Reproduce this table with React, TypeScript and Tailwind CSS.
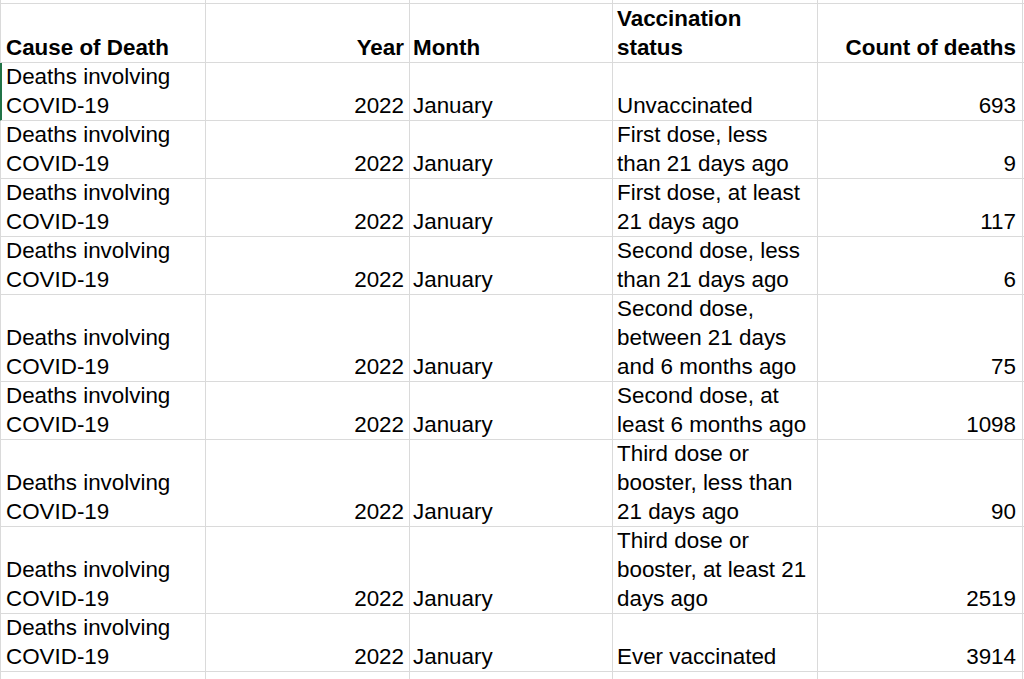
import React from "react";

type Row = {
  status: string[];
  count: number;
};

const rows: Row[] = [
  { status: ["Unvaccinated"], count: 693 },
  { status: ["First dose, less", "than 21 days ago"], count: 9 },
  { status: ["First dose, at least", "21 days ago"], count: 117 },
  { status: ["Second dose, less", "than 21 days ago"], count: 6 },
  { status: ["Second dose,", "between 21 days", "and 6 months ago"], count: 75 },
  { status: ["Second dose, at", "least 6 months ago"], count: 1098 },
  { status: ["Third dose or", "booster, less than", "21 days ago"], count: 90 },
  { status: ["Third dose or", "booster, at least 21", "days ago"], count: 2519 },
  { status: ["Ever vaccinated"], count: 3914 },
];

const cols = "grid grid-cols-[206px_204px_203px_205px_205px_1fr]";
const cell = "flex flex-col justify-end border-r border-b border-[#dadada] overflow-hidden whitespace-nowrap";

function Lines({ lines }: { lines: string[] }) {
  return (
    <>
      {lines.map((l) => (
        <span key={l} className="block h-[29px]">
          {l}
        </span>
      ))}
    </>
  );
}

export default function App() {
  return (
    <div
      className="w-[1024px] h-[679px] overflow-hidden bg-white text-black text-[22.4px] leading-[29px]"
      style={{ fontFamily: '"Liberation Sans", Arial, sans-serif' }}
    >
      {/* strip of the row above */}
      <div className={`${cols} h-[4px]`}>
        <div className="border-l border-r border-b border-[#dadada]" />
        <div className="border-r border-b border-[#dadada]" />
        <div className="border-r border-b border-[#dadada]" />
        <div className="border-r border-b border-[#dadada]" />
        <div className="border-r border-b border-[#dadada]" />
        <div className="border-b border-[#dadada]" />
      </div>

      {/* header */}
      <div className={`${cols} h-[59px] font-bold`}>
        <div className={`${cell} border-l pl-[5px]`}>
          <Lines lines={["Cause of Death"]} />
        </div>
        <div className={`${cell} pr-[5px] text-right`}>
          <Lines lines={["Year"]} />
        </div>
        <div className={`${cell} pl-[3px]`}>
          <Lines lines={["Month"]} />
        </div>
        <div className={`${cell} pl-[4px]`}>
          <Lines lines={["Vaccination", "status"]} />
        </div>
        <div className={`${cell} pr-[6px] text-right`}>
          <Lines lines={["Count of deaths"]} />
        </div>
        <div className="border-b border-[#dadada]" />
      </div>

      {/* body */}
      {rows.map((r, i) => {
        const n = Math.max(2, r.status.length);
        return (
          <div key={i} className={cols} style={{ height: n * 29 }}>
            <div
              className={`${cell} pl-[5px] border-l ${
                i === 0 ? "border-l-[#217346] shadow-[inset_1px_0_0_#217346]" : ""
              }`}
            >
              <Lines lines={["Deaths involving", "COVID-19"]} />
            </div>
            <div className={`${cell} pr-[5px] text-right`}>
              <Lines lines={["2022"]} />
            </div>
            <div className={`${cell} pl-[3px]`}>
              <Lines lines={["January"]} />
            </div>
            <div className={`${cell} pl-[4px]`}>
              <Lines lines={r.status} />
            </div>
            <div className={`${cell} pr-[6px] text-right`}>
              <Lines lines={[String(r.count)]} />
            </div>
            <div className="border-b border-[#dadada]" />
          </div>
        );
      })}

      {/* next row, cut off */}
      <div className={`${cols} h-[58px]`}>
        <div className="border-l border-r border-[#dadada]" />
        <div className="border-r border-[#dadada]" />
        <div className="border-r border-[#dadada]" />
        <div className="border-r border-[#dadada]" />
        <div className="border-r border-[#dadada]" />
        <div />
      </div>
    </div>
  );
}
